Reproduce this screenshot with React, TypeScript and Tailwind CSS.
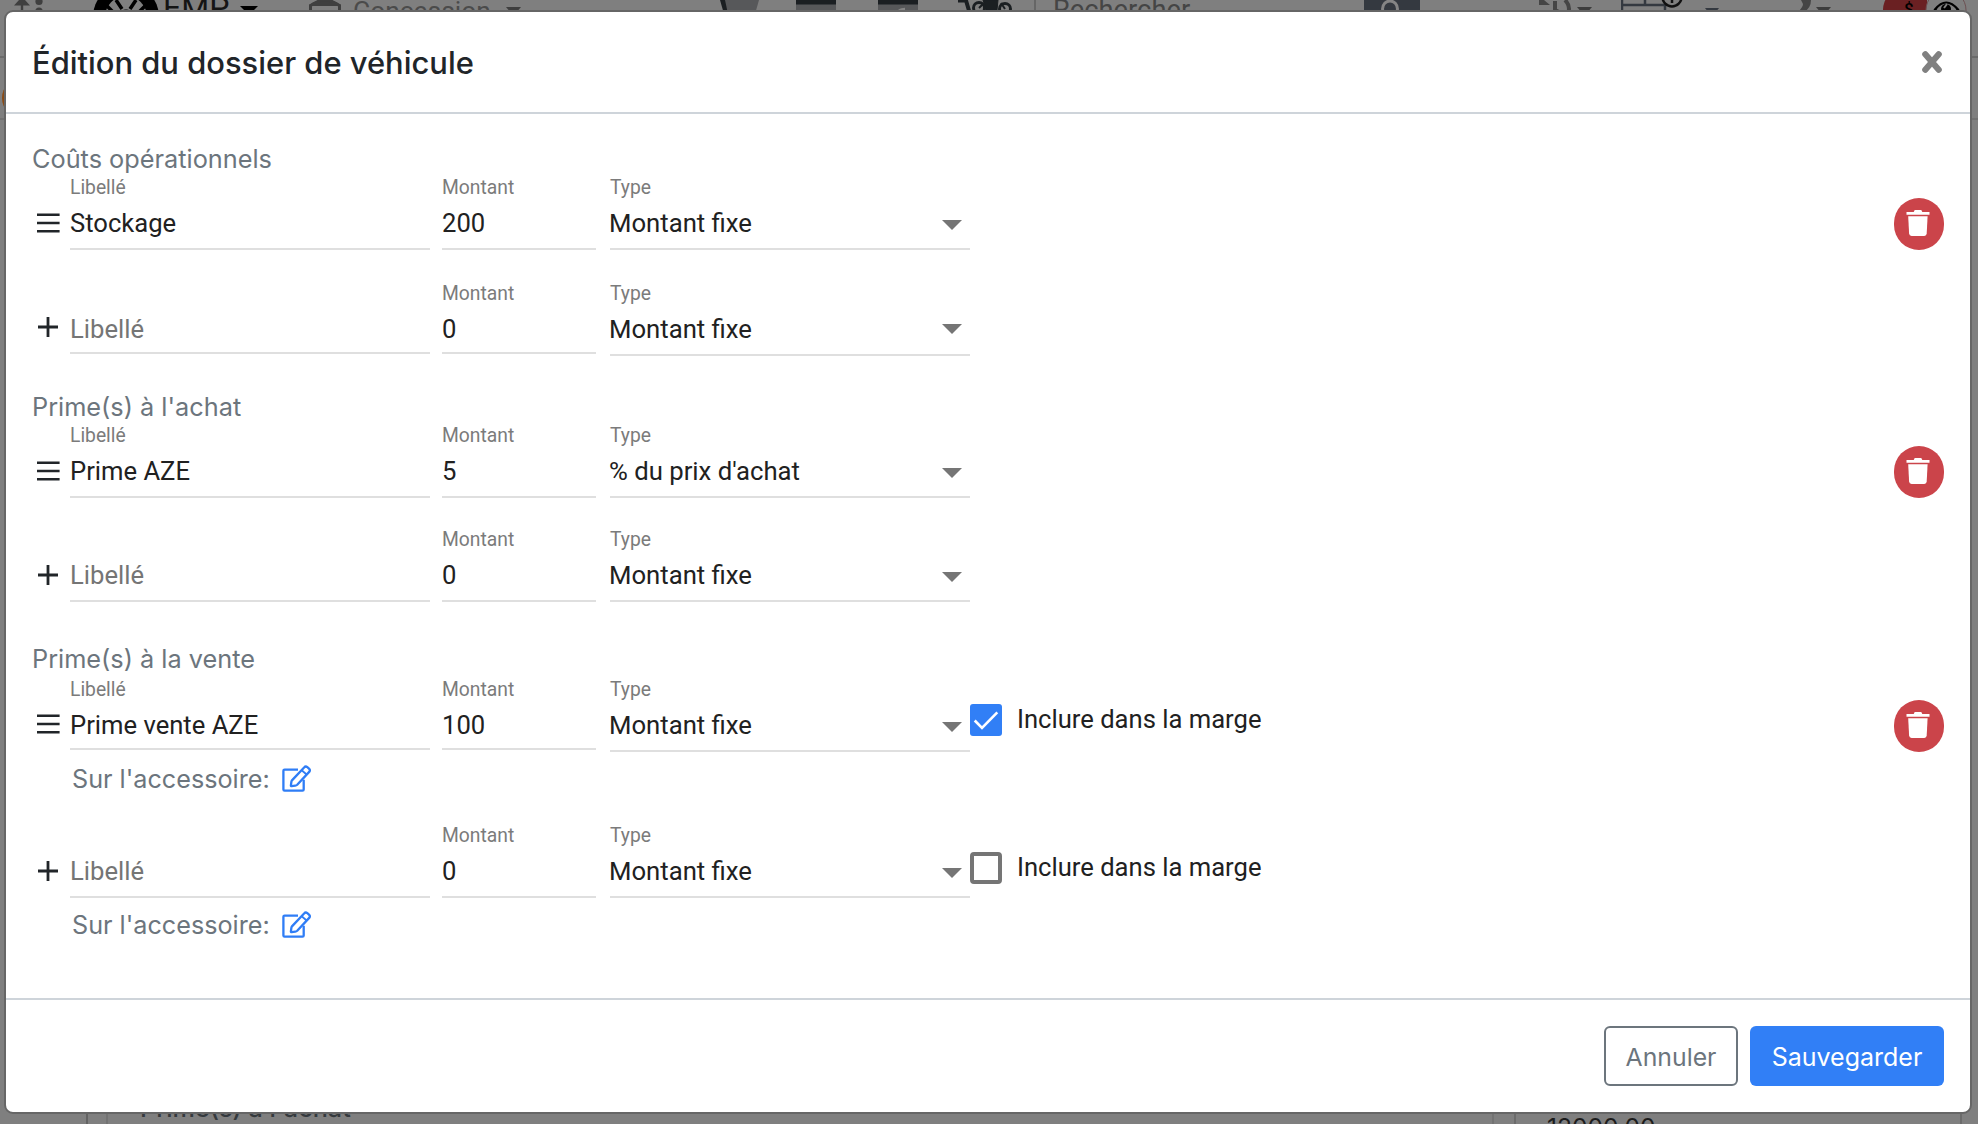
import React from "react";

const ROBOTO = "font-['Roboto','Liberation_Sans',sans-serif]";
const INTER = "font-['Inter','Liberation_Sans',sans-serif]";

function DragIcon({ className }: { className: string }) {
  return (
    <svg className={className} width="23" height="20" viewBox="0 0 23 20" fill="none" stroke="#212529" strokeWidth="2.5">
      <path d="M0 1.8h22.6M0 10h22.6M0 18.2h22.6" />
    </svg>
  );
}

function PlusIcon({ className }: { className: string }) {
  return (
    <svg className={className} width="20" height="20" viewBox="0 0 20 20" fill="none" stroke="#212529" strokeWidth="2.8">
      <path d="M0 10h20M10 0v20" />
    </svg>
  );
}

function TrashButton() {
  return (
    <button className="ml-auto mt-[23px] flex h-[52px] w-[50px] justify-center rounded-[25px] bg-[#cb444a] pr-[2px] pt-3">
      <svg width="24" height="26" viewBox="0 0 24 26" fill="#fff">
        <path d="M0.5 2h7.200l1-2h6.600l1 2h7.200v2.800h-23z" />
        <path d="M2.200 6.200h19.400l-.9 17.400q-.2 2.400-2.400 2.400H5.500q-2.200 0-2.400-2.400z" />
      </svg>
    </button>
  );
}

function EditIcon() {
  return (
    <svg className="mt-px" width="29" height="28" viewBox="0 0 29 28" fill="none" stroke="#2f7df6" strokeWidth="2.3" strokeLinejoin="round">
      <path d="M16 4.600H2.600Q1.400 4.600 1.400 5.800V24.400Q1.400 25.600 2.600 25.600H20.500Q21.700 25.600 21.700 24.400V14.800" />
      <path d="M22.100 2.500Q23.600 .800 25.300 2.200L27 3.700Q28.600 5.200 27.200 6.900L15.200 19.800Q14.400 20.600 13.300 20.700L9.600 21.100Q8.800 21.100 8.900 20.300L9.400 16.700Q9.600 15.800 10.200 15.100Z" />
      <path d="M19.700 5.200L24.600 9.500" strokeWidth="1.800" />
    </svg>
  );
}

function Field({ label, value, width, pad, placeholder }: { label: string; value: string; width: string; pad: string; placeholder?: boolean }) {
  return (
    <div className={`${width} shrink-0 self-start border-b-2 border-[#dfdfdf] ${pad}`}>
      <div className="h-[33px] pt-px text-[19.3px] leading-6 text-[#7b7b7b]">{label}</div>
      <div className={`h-[30px] whitespace-nowrap text-[25.6px] leading-[30px] ${placeholder ? "text-[#757575]" : "text-[#212121]"}`}>{value}</div>
    </div>
  );
}

function SelectField({ value, caret }: { value: string; caret: string }) {
  return (
    <div className="ml-[14px] flex w-[360px] shrink-0 self-start border-b-2 border-[#dfdfdf] pb-[10px]">
      <div className="flex-1">
        <div className="h-[33px] pt-px text-[19.3px] leading-6 text-[#7b7b7b]">Type</div>
        <div className="-ml-px h-[30px] text-[25.7px] leading-[30px] text-[#212121]">{value}</div>
      </div>
      <svg className={`mr-2 ${caret}`} width="20" height="10" viewBox="0 0 20 10" fill="#757575">
        <path d="M0 0h20L10 10z" />
      </svg>
    </div>
  );
}

type RowProps = {
  spacing: string;
  label?: string;
  amount: string;
  type?: string;
  pad?: string;
  icon: string;
  caret?: string;
  margin?: { checked: boolean; top: string };
};

function Row({ spacing, label, amount, type = "Montant fixe", pad = "pb-[10px]", icon, caret = "mt-[45px]", margin }: RowProps) {
  return (
    <div className={`flex h-[77px] items-start ${spacing} ${ROBOTO}`}>
      <div className="w-[38px] shrink-0">
        {label ? <DragIcon className={`ml-[5px] ${icon}`} /> : <PlusIcon className={`ml-[6px] ${icon}`} />}
      </div>
      <Field label={label ? "Libellé" : ""} value={label ?? "Libellé"} placeholder={!label} width="w-[360px]" pad={pad} />
      <Field label="Montant" value={amount} width="ml-3 w-[154px]" pad={pad} />
      <SelectField value={type} caret={caret} />
      {margin && (
        <label className={`flex ${margin.top}`}>
          {margin.checked ? (
            <span className="block size-8 rounded-[3px] bg-[#317ff6]">
              <svg width="32" height="32" viewBox="0 0 32 32" fill="none" stroke="#fff" strokeWidth="2.600">
                <path d="M4.700 16.500l7.300 7.300L27.300 8.300" />
              </svg>
            </span>
          ) : (
            <span className="block size-8 rounded-[4px] border-4 border-[#757575]" />
          )}
          <span className="ml-[15px] text-[25.6px] leading-[30px] text-[#212121]">Inclure dans la marge</span>
        </label>
      )}
      {label && <TrashButton />}
    </div>
  );
}

function Heading({ children, spacing = "" }: { children: string; spacing?: string }) {
  return <h2 className={`h-[30px] text-[25.3px] leading-[30px] text-[#6c757d] ${spacing}`}>{children}</h2>;
}

function Accessory() {
  return (
    <div className="ml-10 mt-[10px] flex h-[30px] items-start text-[25.2px] leading-[30px] text-[#6c757d]">
      <span className="w-[210px]">Sur l'accessoire:</span>
      <EditIcon />
    </div>
  );
}

function Caret({ className, w = 18 }: { className: string; w?: number }) {
  return (
    <svg className={`shrink-0 ${className}`} width={w} height="9" viewBox="0 0 18 9" preserveAspectRatio="none" fill="currentColor">
      <path d="M0 0h18L9 9z" />
    </svg>
  );
}

function TopBar() {
  return (
    <header className={`flex h-[58px] shrink-0 items-start overflow-hidden whitespace-nowrap border-b-2 border-[#6a6a6a] text-[#3d3d3d] ${ROBOTO}`}>
      <svg className="ml-[14px] shrink-0" width="30" height="14" viewBox="0 0 30 14" fill="#3f3f3f">
        <path d="M0 5.500L5 0h6l5 5.500z M6.800 5h2.400v9H6.800z" />
        <circle cx="25" cy="1.500" r="3.600" />
        <circle cx="25" cy="11" r="3.600" />
      </svg>
      <svg className="ml-[49px] shrink-0" width="66" height="14" viewBox="0 0 66 14">
        <circle cx="33" cy="17" r="33" fill="#000" />
        <circle cx="33" cy="17" r="21" fill="#7f7f7f" />
        <path d="M23 0l6 9M43 0l-6 9M14 6l7 7M52 6l-7 7" stroke="#000" strokeWidth="3.500" />
        <path d="M24 14q9-9 18 0z" fill="#000" />
      </svg>
      <span className="-mt-[12px] ml-[4px] w-[81px] shrink-0 text-[32px] leading-[40px] text-[#151515]">EMP</span>
      <Caret className="-ml-[4px] mt-[6px] text-black" />
      <svg className="ml-[51px] shrink-0" width="32" height="14" viewBox="0 0 32 14" fill="none" stroke="#3f3f3f" strokeWidth="3">
        <path d="M1.500 14V5.500L12 .500h8L30.500 5.500V14" />
        <path d="M3 4.500L12 0h8l9 4.500z" fill="#3f3f3f" />
        <path d="M6 12.500h11" strokeWidth="2" />
      </svg>
      <span className="-mt-[4px] ml-[12px] w-[153px] shrink-0 text-[26.4px] leading-[30px] text-[#4b4b4b]">Concession</span>
      <Caret className="mt-[7px] text-[#3f3f3f]" w={15} />
      <svg className="ml-[199px] shrink-0" width="39" height="14" viewBox="0 0 39 14">
        <path d="M3 0h36l-4 14H6z" fill="#57585a" />
        <path d="M0 0h5l3 14H4z" fill="#1b1f22" />
      </svg>
      <svg className="ml-[37px] shrink-0" width="122" height="14" viewBox="0 0 122 14">
        <path d="M0 0h40v14H0zM82 0h40v14H82z" fill="#57585a" />
        <path d="M0 0h40v4.500H0zM82 0h40v4.500H82z" fill="#1b1f22" />
        <path d="M102 14q0-5 7-5M23 13l3-2" stroke="#858585" strokeWidth="2.500" fill="none" />
      </svg>
      <svg className="ml-[40px] shrink-0" width="54" height="14" viewBox="0 0 54 14" fill="none" stroke="#1b1f22">
        <path d="M0 .5h8l4 13.500" strokeWidth="4" />
        <path d="M25 0h15l-1 10H28z" fill="#1b1f22" />
        <circle cx="21" cy="8" r="5.500" strokeWidth="3" />
        <circle cx="47" cy="9" r="5.500" strokeWidth="3" />
        <path d="M21 8l4-4M47 9l-4-6" strokeWidth="2" />
      </svg>
      <span className="ml-[22px] h-full w-[2px] shrink-0 bg-[#666]" />
      <span className="-mt-[5px] ml-[17px] w-[311px] shrink-0 text-[27.3px] leading-[31px] text-[#454545]">Rechercher</span>
      <span className="h-10 w-[56px] shrink-0 bg-[#343940]">
        <svg width="56" height="20" viewBox="0 0 56 20" fill="none" stroke="#858585" strokeWidth="3">
          <ellipse cx="26" cy="9" rx="7.500" ry="8" />
        </svg>
      </span>
      <svg className="ml-[119px] shrink-0" width="34" height="14" viewBox="0 0 34 14" fill="none" stroke="#454545" strokeWidth="4">
        <path d="M0 0h5l6 5H0z" fill="#454545" stroke="none" />
        <path d="M16 1v9l4 2M26 0q6 6 3 14" />
      </svg>
      <Caret className="ml-[4px] mt-[7px]" w={15} />
      <svg className="ml-[29px] shrink-0" width="62" height="14" viewBox="0 0 62 14" fill="none" stroke="#343940" strokeWidth="2.500">
        <path d="M1 0v14M44 3v11M0 5h45M24 0v5M7 11.500h26" />
        <circle cx="51" cy="-3" r="9.500" stroke="#111" />
        <path d="M51 0v3" stroke="#111" />
      </svg>
      <Caret className="ml-[22px] mt-[8px] text-[#343940]" w={14} />
      <svg className="ml-[78px] shrink-0" width="14" height="14" viewBox="0 0 14 14" fill="#454545">
        <path d="M4 0h10q0 8-7 12H1q5-5 5-8z" />
      </svg>
      <Caret className="ml-[5px] mt-[7px]" w={15} />
      <svg className="ml-[52px] shrink-0" width="84" height="14" viewBox="0 0 84 14">
        <circle cx="22" cy="10" r="22" fill="#6a2022" />
        <path d="M22 0h22v14H22z" fill="#6a2022" />
        <circle cx="63" cy="10" r="20" fill="#7f7f7f" stroke="#6d5052" />
        <path d="M52 9.500q11-14 23 0q-11 12-23 0z" fill="none" stroke="#000" strokeWidth="2.200" />
        <circle cx="63" cy="9" r="5" fill="#000" />
        <path d="M64 4l-3 4" stroke="#7f7f7f" strokeWidth="2" />
        <text x="21" y="15" fontSize="17" fill="#000" fontFamily="Roboto" fontWeight="500">$</text>
      </svg>
    </header>
  );
}

function PageBehind() {
  return (
    <div className="flex h-full flex-col bg-[#7f7f7f]">
      <TopBar />
      <div className="flex flex-1 flex-col justify-between">
        <div className="flex h-[62px] items-start border-b-2 border-[#727272]">
          <span className="ml-[2px] mt-[20px] size-10 rounded-full bg-[#8a4b14]" />
        </div>
        <div className="flex h-[14px] overflow-hidden">
          <span className="ml-[86px] w-[2px] bg-[#636363]" />
          <span className="ml-[18px] w-[2px] bg-[#737373]" />
          <span className={`-mt-[17px] ml-[32px] w-[1352px] whitespace-nowrap text-[25.2px] font-medium leading-[30px] text-[#353a3e] ${INTER}`}>Prime(s) à l'achat</span>
          <span className="w-[2px] bg-[#737373]" />
          <span className="w-[20px]" />
          <span className="w-[2px] bg-[#6b6b6b]" />
          <span className={`mt-[2px] ml-[31px] w-[413px] text-[24.600px] leading-[30px] text-[#1c1c1c] ${INTER}`}>12000.00</span>
          <span className="w-[2px] bg-[#6b6b6b]" />
        </div>
      </div>
    </div>
  );
}

function Modal() {
  return (
    <div role="dialog" className="absolute left-[4px] top-[10px] flex h-[1104px] w-[1968px] flex-col rounded-[9px] border-2 border-[#666] bg-white">
      <div className="flex h-[102px] shrink-0 items-center justify-between border-b-2 border-[#ced4da] pl-[26px] pr-[27px]">
        <h1 className={`pt-[2px] text-[30.9px] font-medium leading-10 text-[#212529] ${INTER}`}>Édition du dossier de véhicule</h1>
        <button aria-label="Fermer">
          <svg width="22" height="24" viewBox="0 0 22 24" fill="none" stroke="#808080" strokeWidth="6.200" strokeLinecap="round">
            <path d="M4.300 4.300L17.700 19.700M17.700 4.300L4.300 19.700" />
          </svg>
        </button>
      </div>
      <div className={`flex-1 pl-[26px] pr-[26px] pt-[30px] ${INTER}`}>
        <Heading>Coûts opérationnels</Heading>
        <Row spacing="mt-px" label="Stockage" amount="200" icon="mt-[38px]" />
        <Row spacing="mt-[29px]" amount="0" icon="mt-[36px]" pad="pb-2" caret="mt-[43px]" />
        <Heading spacing="mt-[34px]">Prime(s) à l'achat</Heading>
        <Row spacing="mt-px" label="Prime AZE" amount="5" type="% du prix d'achat" icon="mt-[38px]" />
        <Row spacing="mt-[27px]" amount="0" icon="mt-[38px]" />
        <Heading spacing="mt-[40px]">Prime(s) à la vente</Heading>
        <Row spacing="mt-[3px]" label="Prime vente AZE" amount="100" icon="mt-[37px]" pad="pb-2" margin={{ checked: true, top: "mt-[27px]" }} />
        <Accessory />
        <Row spacing="mt-[29px]" amount="0" icon="mt-[38px]" margin={{ checked: false, top: "mt-[29px]" }} />
        <Accessory />
      </div>
      <div className={`flex h-[114px] shrink-0 justify-end gap-3 border-t-2 border-[#ced4da] pr-[26px] pt-[26px] ${INTER}`}>
        <button className="h-[60px] w-[134px] rounded-[6px] border-2 border-[#6c757d] pt-[3px] text-[24.8px] text-[#6c757d]">Annuler</button>
        <button className="h-[60px] w-[194px] rounded-[6px] bg-[#317ff6] pt-[3px] text-[25px] text-white">Sauvegarder</button>
      </div>
    </div>
  );
}

export default function App() {
  return (
    <div className="relative h-[1124px] w-[1978px] overflow-hidden">
      <PageBehind />
      <Modal />
    </div>
  );
}
